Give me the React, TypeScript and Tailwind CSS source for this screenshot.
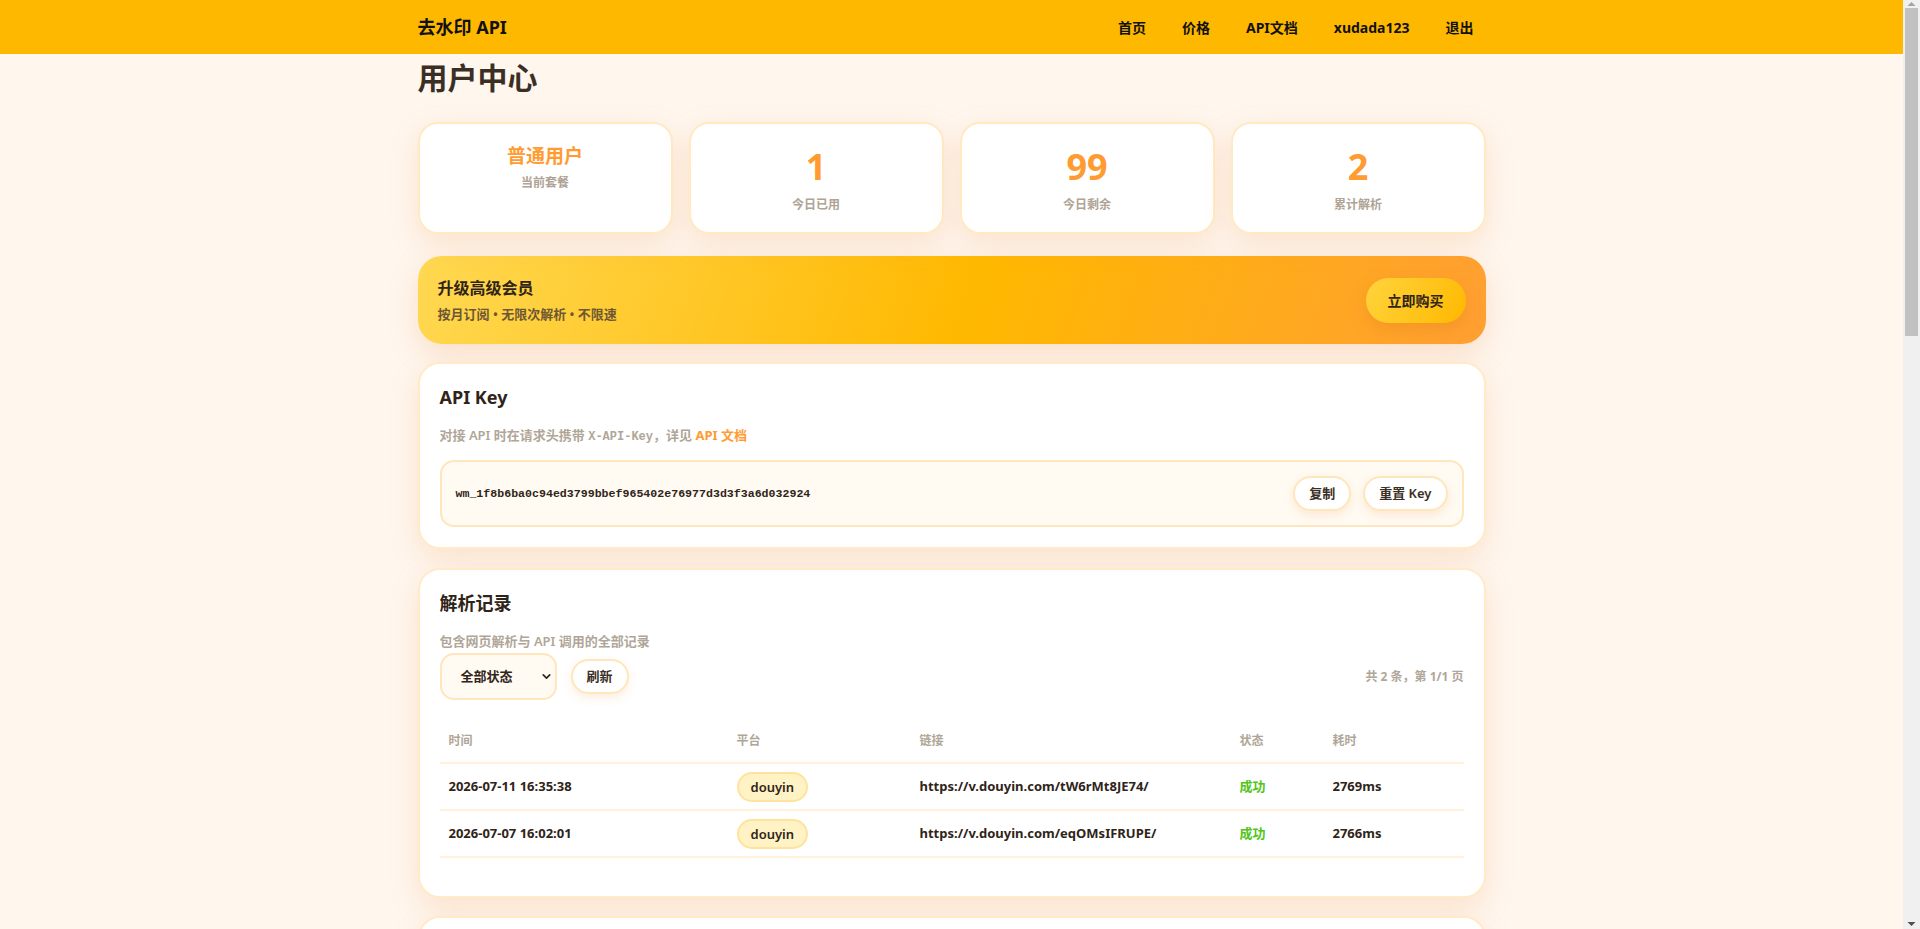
import { ChevronDown } from 'lucide-react'

interface Stat {
  value: string
  label: string
  small?: boolean
}

interface ParseRecord {
  time: string
  platform: string
  url: string
  status: string
  cost: string
}

const stats: Stat[] = [
  { value: '普通用户', label: '当前套餐', small: true },
  { value: '1', label: '今日已用' },
  { value: '99', label: '今日剩余' },
  { value: '2', label: '累计解析' },
]

const records: ParseRecord[] = [
  {
    time: '2026-07-11 16:35:38',
    platform: 'douyin',
    url: 'https://v.douyin.com/tW6rMt8JE74/',
    status: '成功',
    cost: '2769ms',
  },
  {
    time: '2026-07-07 16:02:01',
    platform: 'douyin',
    url: 'https://v.douyin.com/eqOMsIFRUPE/',
    status: '成功',
    cost: '2766ms',
  },
]

const navLinks = ['首页', '价格', 'API文档', 'xudada123', '退出']

const card =
  'rounded-[22px] border-2 border-[#FFEBC8] bg-white p-5 shadow-[0_10px_28px_rgba(232,160,90,0.22)]'

const pillButton =
  'rounded-full border-2 border-[#FFE6BC] bg-white px-[14px] py-[7px] text-[13px] leading-[17px] font-semibold text-[#3b2f25] shadow-[0_4px_10px_rgba(240,170,90,0.2)]'

function Header() {
  return (
    <header className="h-[54px] bg-[#FFB800]">
      <div className="mx-auto flex h-full max-w-[1100px] items-center justify-between px-4">
        <span className="text-[18px] font-bold text-[#111]">去水印 API</span>
        <nav className="flex items-center gap-3">
          {navLinks.map((link) => (
            <a key={link} className="px-3 text-[14px] font-bold text-[#111]">
              {link}
            </a>
          ))}
        </nav>
      </div>
    </header>
  )
}

function StatCards() {
  return (
    <div className="mb-[22px] grid grid-cols-4 gap-4">
      {stats.map((s) => (
        <div
          key={s.label}
          className="rounded-[20px] border-2 border-[#FFEAC4] bg-white py-[18px] text-center shadow-[0_10px_28px_rgba(232,160,90,0.22)]"
        >
          <div
            className={`font-bold text-[#FF9B30] ${
              s.small ? 'text-[19px] leading-[28px]' : 'text-[36px] leading-[50px]'
            }`}
          >
            {s.value}
          </div>
          <div className="mt-1 text-[12px] leading-[18px] font-semibold text-[#aea394]">{s.label}</div>
        </div>
      ))}
    </div>
  )
}

function UpgradeBanner() {
  return (
    <div className="mb-[18px] flex items-center justify-between rounded-[24px] bg-[linear-gradient(110deg,#FFD851_0%,#FFB800_52%,#FF9F33_100%)] px-5 py-5 shadow-[0_10px_28px_rgba(232,160,90,0.25)]">
      <div>
        <div className="text-[16px] leading-6 font-bold text-[#2f2418]">升级高级会员</div>
        <div className="mt-1 text-[13px] leading-5 font-semibold text-[#6e5734]">
          按月订阅 • 无限次解析 • 不限速
        </div>
      </div>
      <button className="rounded-full bg-[linear-gradient(120deg,#FFD43D,#FFB800)] px-[22px] py-[13px] text-[14px] leading-[19px] font-semibold text-[#2f2418] shadow-[0_6px_16px_rgba(220,130,30,0.35)]">
        立即购买
      </button>
    </div>
  )
}

function ApiKeyCard() {
  return (
    <section className={`${card} mb-[19px]`}>
      <h2 className="mb-[14px] text-[18px] leading-[27px] font-bold text-[#2f2418]">API Key</h2>
      <p className="text-[13px] leading-5 font-semibold text-[#b0a698]">
        对接 API 时在请求头携带{' '}
        <code className="font-['Liberation_Mono',monospace] text-[12px] font-bold">X-API-Key</code>
        ，详见 <a className="font-bold text-[#FF9B30]">API 文档</a>
      </p>
      <div className="mt-[13px] flex items-center justify-between rounded-[14px] border-2 border-[#FFE6BC] bg-[#FFFAF2] p-[14px]">
        <span className="font-['Liberation_Mono',monospace] text-[11.6px] font-bold text-[#2f2418]">
          wm_1f8b6ba0c94ed3799bbef965402e76977d3d3f3a6d032924
        </span>
        <div className="flex gap-3">
          <button className={pillButton}>复制</button>
          <button className={pillButton}>重置 Key</button>
        </div>
      </div>
    </section>
  )
}

function RecordsCard() {
  return (
    <section className={`${card} mb-[18px]`}>
      <h2 className="mb-[14px] text-[18px] leading-[27px] font-bold text-[#2f2418]">解析记录</h2>
      <p className="text-[13px] leading-5 font-semibold text-[#b0a698]">包含网页解析与 API 调用的全部记录</p>

      <div className="mt-[2px] flex items-center justify-between">
        <div className="flex items-center gap-[14px]">
          <div className="flex h-[47px] w-[117px] items-center justify-between rounded-[14px] border-2 border-[#FFE6BC] bg-[#FFFAF2] pr-[2px] pl-[19px]">
            <span className="text-[13px] font-bold text-[#2f2418]">全部状态</span>
            <ChevronDown size={13} strokeWidth={3} className="text-[#2f2418]" />
          </div>
          <button className={`${pillButton} py-[7.5px]`}>刷新</button>
        </div>
        <span className="text-[12px] font-bold text-[#b0a698]">共 2 条，第 1/1 页</span>
      </div>

      <table className="mt-[19px] w-full table-fixed border-collapse text-left">
        <colgroup>
          <col className="w-[288px]" />
          <col className="w-[183px]" />
          <col className="w-[320px]" />
          <col className="w-[93px]" />
          <col />
        </colgroup>
        <thead>
          <tr className="border-b-2 border-[#FFF1DC]">
            {['时间', '平台', '链接', '状态', '耗时'].map((h) => (
              <th key={h} className="h-[44px] px-[9px] text-[12px] font-semibold text-[#b0a698]">
                {h}
              </th>
            ))}
          </tr>
        </thead>
        <tbody>
          {records.map((r) => (
            <tr key={r.time} className="border-b-2 border-[#FFF1DC]">
              <td className="h-[47px] px-[9px] text-[13px] font-bold text-[#2f2418]">{r.time}</td>
              <td className="h-[47px] px-[9px]">
                <span className="inline-block rounded-full border-2 border-[#FFE39C] bg-[#FFF2C4] px-[12px] py-[3px] text-[13px] leading-5 font-semibold text-[#2f2418]">
                  {r.platform}
                </span>
              </td>
              <td className="h-[47px] px-[9px] text-[13px] font-bold text-[#2f2418]">{r.url}</td>
              <td className="h-[47px] px-[9px] text-[13px] font-semibold text-[#52C41A]">{r.status}</td>
              <td className="h-[47px] px-[9px] text-[13px] font-bold text-[#2f2418]">{r.cost}</td>
            </tr>
          ))}
        </tbody>
      </table>
      <div className="h-[18px]" />
    </section>
  )
}

// classic window scrollbar drawn beside the scrolling page
function ScrollRail() {
  return (
    <div className="flex w-[17px] shrink-0 flex-col items-center bg-[#F0F0F0]">
      <svg width="9" height="6" viewBox="0 0 9 6" className="mt-[1px]">
        <path d="M0.5 5 L4.5 1 L8.5 5 Z" fill="#A3A3A3" />
      </svg>
      <div className="mt-[1px] h-[328px] w-[13px] bg-[#C1C1C1]" />
      <div className="flex-1" />
      <svg width="9" height="6" viewBox="0 0 9 6" className="mb-[2px]">
        <path d="M0.5 1 L4.5 5 L8.5 1 Z" fill="#505050" />
      </svg>
    </div>
  )
}

export default function App() {
  return (
    <div className="flex h-screen overflow-hidden font-['Noto_Sans','Noto_Sans_CJK_SC',sans-serif] text-[#2f2418]">
      <div className="flex-1 overflow-y-auto bg-[#FFF6EE] [scrollbar-width:none]">
        <div className="min-h-[2630px]">
          <Header />
          <main className="mx-auto max-w-[1100px] px-4 pt-[6px] pb-10">
            <h1 className="mb-[26px] text-[30px] leading-[36px] font-bold text-[#3b2f25]">用户中心</h1>
            <StatCards />
            <UpgradeBanner />
            <ApiKeyCard />
            <RecordsCard />
            {/* account settings card continues below the fold */}
            <section className={`${card} min-h-[420px]`} />
          </main>
        </div>
      </div>
      <ScrollRail />
    </div>
  )
}
